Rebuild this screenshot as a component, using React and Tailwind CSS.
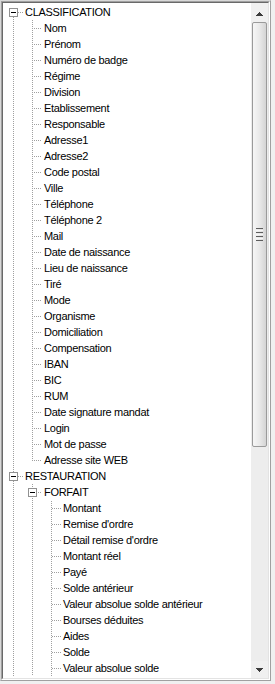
import React from 'react';

const classification = [
  'Nom', 'Prénom', 'Numéro de badge', 'Régime', 'Division', 'Etablissement', 'Responsable',
  'Adresse1', 'Adresse2', 'Code postal', 'Ville', 'Téléphone', 'Téléphone 2', 'Mail',
  'Date de naissance', 'Lieu de naissance', 'Tiré', 'Mode', 'Organisme', 'Domiciliation',
  'Compensation', 'IBAN', 'BIC', 'RUM', 'Date signature mandat', 'Login', 'Mot de passe',
  'Adresse site WEB',
];

const forfait = [
  'Montant', 'Remise d\'ordre', 'Détail remise d\'ordre', 'Montant réel', 'Payé', 'Solde antérieur',
  'Valeur absolue solde antérieur', 'Bourses déduites', 'Aides', 'Solde', 'Valeur absolue solde',
];

// flat list of visible rows, each with its gutter cells
const rows = [
  { label: 'CLASSIFICATION', cells: [{ type: 'box', up: false, down: true }] },
  ...classification.map((label, i) => ({
    label,
    cells: ['line', i === classification.length - 1 ? 'corner' : 'tee'],
  })),
  { label: 'RESTAURATION', cells: [{ type: 'box', up: true, down: true }] },
  { label: 'FORFAIT', cells: ['line', { type: 'box', up: true, down: true }] },
  ...forfait.map((label) => ({ label, cells: ['line', 'line', 'tee'] })),
];

const DOT = '#a0a0a0';

function vdots(x, y0, y1, parity) {
  const out = [];
  for (let y = y0; y <= y1; y++) {
    if (y % 2 === parity) out.push(<rect key={'v' + x + '-' + y} x={x} y={y} width="1" height="1" fill={DOT} />);
  }
  return out;
}

function hdots(y, x0, x1, parity) {
  const out = [];
  for (let x = x0; x <= x1; x++) {
    if (x % 2 === parity) out.push(<rect key={'h' + x + '-' + y} x={x} y={y} width="1" height="1" fill={DOT} />);
  }
  return out;
}

const GutterCell = ({ cell, col }) => {
  const vp = (col + 1) % 2;
  const hp = col % 2;
  let parts = [];
  if (cell === 'line') {
    parts = vdots(9, 0, 15, vp);
  } else if (cell === 'tee') {
    parts = [...vdots(9, 0, 15, vp), ...hdots(8, 10, 18, hp)];
  } else if (cell === 'corner') {
    parts = [...vdots(9, 0, 8, vp), ...hdots(8, 10, 18, hp)];
  } else if (cell.type === 'box') {
    if (cell.up) parts.push(...vdots(9, 0, 3, vp));
    if (cell.down) parts.push(...vdots(9, 13, 15, vp));
    parts.push(...hdots(8, 14, 18, hp));
    parts.push(<rect key="b" x="5.5" y="4.5" width="8" height="8" fill="#ffffff" stroke="#919191" strokeWidth="1" />);
    parts.push(<rect key="m" x="7" y="8" width="5" height="1" fill="#000000" />);
  }
  return (
    <svg width="19" height="16" viewBox="0 0 19 16" shapeRendering="crispEdges" className="shrink-0 block">
      {parts}
    </svg>
  );
};

const TreeRow = ({ row }) => (
  <div className="flex h-[16px] items-center">
    {row.cells.map((cell, i) => (
      <GutterCell key={i} cell={cell} col={i} />
    ))}
    <span className="pl-[2px] whitespace-nowrap leading-[16px] text-black">{row.label}</span>
  </div>
);

const ScrollBar = () => (
  <div className="w-[17px] shrink-0 flex flex-col bg-[#ececec]">
    <div className="h-[19px] flex items-center justify-center pt-[2px] bg-[#f0f0f0]">
      <svg width="7" height="4" viewBox="0 0 7 4" shapeRendering="crispEdges">
        <path d="M3 0h1v1h1v1h1v1h1v1H0V3h1V2h1V1h1z" fill="#3c3c3c" />
      </svg>
    </div>
    <div className="h-[425px] mx-[1px] border border-[#9a9a9a] rounded-[2px] bg-gradient-to-r from-[#f6f6f6] via-[#e9e9e9] to-[#d4d4d4] flex flex-col items-center justify-center gap-[1px]">
      <div className="w-[7px] h-[1px] bg-[#5e5e5e]" />
      <div className="w-[7px] h-[1px] bg-[#f6f6f6]" />
      <div className="w-[7px] h-[1px] bg-[#5e5e5e]" />
      <div className="w-[7px] h-[1px] bg-[#f6f6f6]" />
      <div className="w-[7px] h-[1px] bg-[#5e5e5e]" />
      <div className="w-[7px] h-[1px] bg-[#f6f6f6]" />
      <div className="w-[7px] h-[1px] bg-[#5e5e5e]" />
    </div>
    <div className="flex-1 bg-[#ededed]" />
    <div className="h-[17px] flex items-center justify-center bg-[#f0f0f0]">
      <svg width="7" height="4" viewBox="0 0 7 4" shapeRendering="crispEdges">
        <path d="M0 0h7v1H6v1H5v1H4v1H3V3H2V2H1V1H0z" fill="#3c3c3c" />
      </svg>
    </div>
  </div>
);

export default function App() {
  return (
    <div className="w-[275px] h-[684px] bg-[#f0f0f0] overflow-hidden font-['Liberation_Sans',Arial,sans-serif] text-[11px] tracking-[-0.3px]">
      <div className="w-[271px] h-[681px] border border-t-[#d8d8d8] border-l-[#d8d8d8] border-r-[#a0a0a0] border-b-[#a0a0a0]">
        <div className="w-full h-full border border-t-[#a0a0a0] border-l-[#a0a0a0] border-r-white border-b-white">
          <div className="w-full h-full border border-t-[#696969] border-l-[#696969] border-r-[#e3e3e3] border-b-[#e3e3e3] bg-white flex">
            <div className="flex-1 overflow-hidden pt-[1px] pl-[1px]">
              {rows.map((row, i) => (
                <TreeRow key={i} row={row} />
              ))}
            </div>
            <ScrollBar />
          </div>
        </div>
      </div>
    </div>
  );
}
